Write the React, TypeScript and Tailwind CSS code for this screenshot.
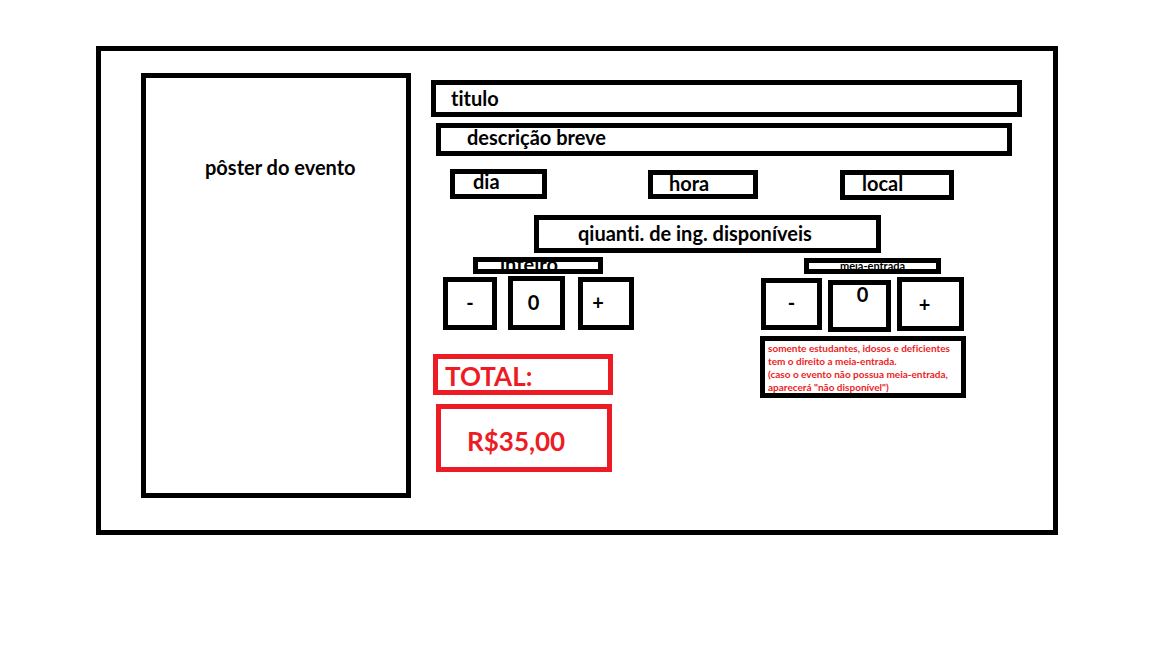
import { useState } from "react";

const box = "overflow-hidden border-5 border-black whitespace-nowrap";

export default function App() {
  const [full, setFull] = useState(0);
  const [half, setHalf] = useState(0);

  return (
    <main className="min-h-screen bg-white pt-[46px] pr-[94px] pb-8 pl-24 font-['Lato',sans-serif] text-xl font-bold text-black [font-variant-ligatures:none]">
      <article className="flex gap-5 border-5 border-black pt-[22px] pr-[31px] pb-8 pl-10">
        <div className="min-h-[425px] w-[270px] shrink-0 border-5 border-black pt-[77px] pl-[59px] leading-6">
          pôster do evento
        </div>

        <div className="min-w-0 flex-1 pt-[7px]">
          <h1 className={`${box} h-[37px] pl-[15px] leading-[26px]`}>titulo</h1>
          <p className={`${box} mt-1.5 mr-2.5 ml-[5px] h-[33px] pl-[26px] leading-[18px]`}>
            descrição breve
          </p>

          <div className="mt-[13px] mr-[68px] ml-[19px] grid grid-cols-[198fr_192fr_114fr] leading-4">
            <div className={`${box} h-[30px] w-[97px] pl-[18px] leading-[14px]`}>dia</div>
            <div className={`${box} mt-px h-[29px] w-[110px] pl-4`}>hora</div>
            <div className={`${box} mt-px h-[30px] w-[114px] pl-[17px]`}>local</div>
          </div>

          <h2 className={`${box} mt-[15px] mr-[141px] ml-[103px] h-[38px] pl-[39px] leading-[26px]`}>
            qiuanti. de ing. disponíveis
          </h2>

          <div className="mt-1 mr-14 ml-0.5 flex justify-between">
            <section>
              <h3 className={`${box} ml-10 h-[17px] w-[130px] pl-[22px] leading-1`}>inteiro</h3>
              <div className="mt-0.5 ml-2.5 flex items-end leading-6">
                <button
                  type="button"
                  aria-label="Remover inteiro"
                  className={`${box} mr-[11px] h-[53px] w-[54px] pb-1`}
                  onClick={() => setFull(Math.max(0, full - 1))}
                >
                  -
                </button>
                <output className={`${box} mr-[13px] h-[54px] w-[57px] pt-[9px] pr-1.5 text-center`}>{full}</output>
                <button
                  type="button"
                  aria-label="Adicionar inteiro"
                  className={`${box} h-[53px] w-14 pr-4 pb-1`}
                  onClick={() => setFull(full + 1)}
                >
                  +
                </button>
              </div>
              <div className="mt-6 h-[41px] w-[180px] border-5 border-[#ed1c24] pl-[7px] text-[26px] leading-[34px] text-[#ed1c24]">
                TOTAL:
              </div>
              <div className="mt-[9px] ml-[3px] h-[68px] w-44 border-5 border-[#ed1c24] pt-[15px] pl-[26px] text-[26px] leading-[34px] text-[#ed1c24]">
                R$35,00
              </div>
            </section>

            <section className="w-[206px] pt-px">
              <h3 className={`${box} ml-11 h-4 w-[137px] text-center text-[11px] leading-1.5`}>
                meia-entrada
              </h3>
              <div className="mt-[3px] ml-px flex items-start gap-1.5 leading-6">
                <button
                  type="button"
                  aria-label="Remover meia-entrada"
                  className={`${box} mt-px h-[52px] w-[61px] pb-1`}
                  onClick={() => setHalf(Math.max(0, half - 1))}
                >
                  -
                </button>
                <output className={`${box} mt-[3px] h-[52px] w-[63px] pl-1.5 text-center leading-[18px]`}>{half}</output>
                <button
                  type="button"
                  aria-label="Adicionar meia-entrada"
                  className={`${box} h-[54px] w-[67px] pr-3`}
                  onClick={() => setHalf(half + 1)}
                >
                  +
                </button>
              </div>
              <p className={`${box} mt-1 h-[62px] pt-px pl-[3px] text-[10px] leading-[13px] text-[#ed1c24]`}>
                somente estudantes, idosos e deficientes
                <br />
                tem o direito a meia-entrada.
                <br />
                (caso o evento não possua meia-entrada,
                <br />
                aparecerá "não disponível")
              </p>
            </section>
          </div>
        </div>
      </article>
    </main>
  );
}
